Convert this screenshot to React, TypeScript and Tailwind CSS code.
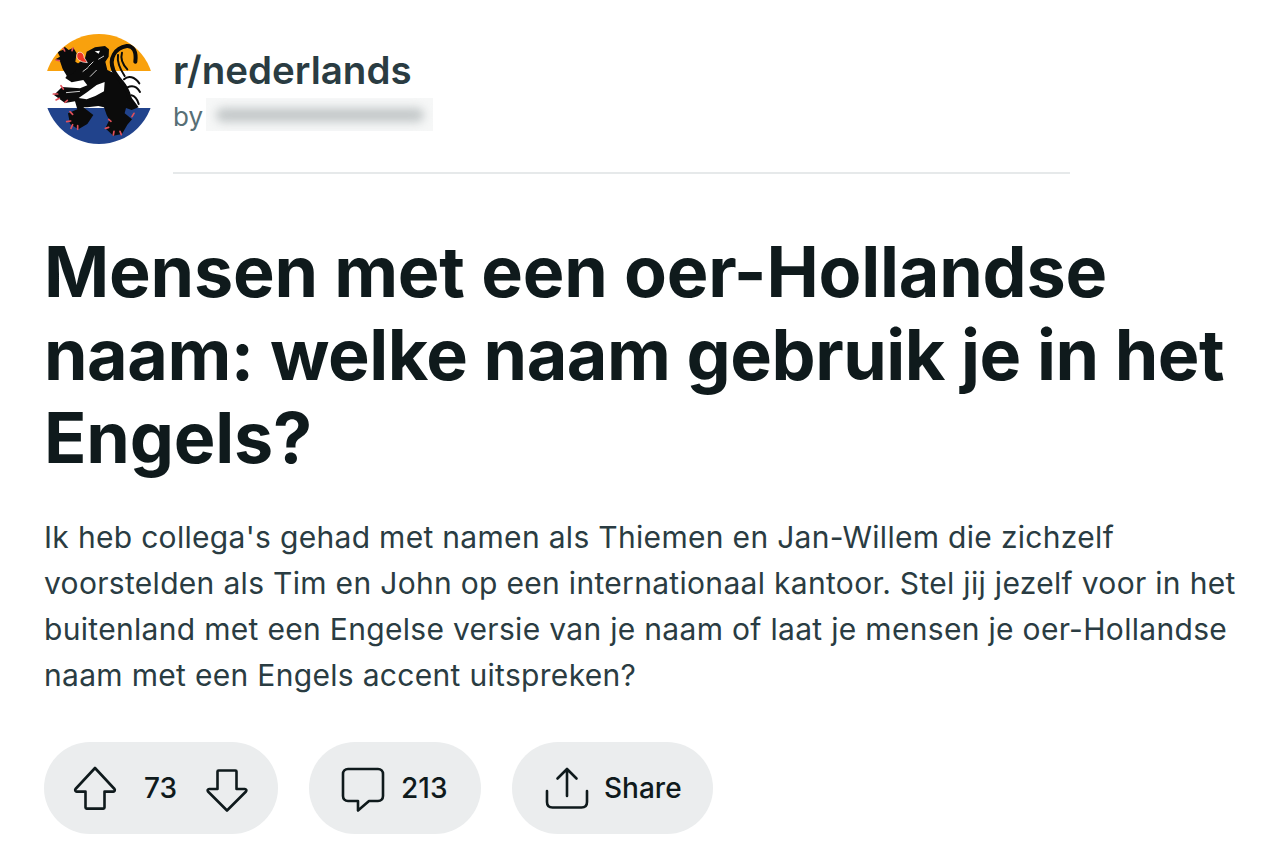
import React from "react";

function Lion() {
  return (
    <svg viewBox="0 0 110 110" className="w-[110px] h-[110px] rounded-full shrink-0">
      <rect width="110" height="37" fill="#f9a10d" />
      <rect y="37" width="110" height="37" fill="#fff" />
      <rect y="74" width="110" height="36" fill="#21438c" />
      <g transform="translate(-14 -14) scale(0.33333)">
        <path fill="#0b0b0b" d="M170,95 L195,82 L225,78 L237,88 L236,110 L226,125 L232,150 L258,162 L286,192 L306,235 L326,262 L305,270 L288,264 L284,280 L306,298 L292,314 L276,342 L250,347 L226,325 L238,300 L230,285 L222,262 L205,258 L172,262 L160,262 L190,285 L172,312 L145,328 L120,312 L114,280 L142,268 L135,244 L105,249 L72,225 L96,201 L150,205 L172,196 L160,180 L125,187 L106,174 L122,150 L145,130 L165,115 Z" />
        <path fill="#0b0b0b" d="M82,95 L98,90 L104,80 L116,90 L130,83 L140,100 L136,125 L152,135 L130,160 L112,170 L98,147 L90,124 L76,118 L90,110 Z" />
        <path fill="none" stroke="#0b0b0b" strokeWidth="12" strokeLinecap="round" d="M298,235 C296,200 262,178 250,150 C236,115 255,84 290,78 C310,76 320,95 316,125" />
        <path fill="none" stroke="#0b0b0b" strokeWidth="6" strokeLinecap="round" d="M264,105 C260,130 272,150 284,168 M276,98 C270,118 280,135 292,148 M282,178 C295,166 314,170 328,190 M292,202 C305,196 320,198 330,216 M304,226 C314,228 322,238 326,252" />
        <path fill="#fff" d="M146,234 L172,216 L200,195 L224,186 L222,214 L196,228 L170,238 Z" />
        <path fill="#fff" d="M194,94 L210,92 L206,101 Z" />
        <path fill="none" stroke="#d0d0d0" strokeWidth="3" d="M175,140 L190,125 M158,155 L175,142 M205,118 L222,108 M108,218 L150,214 M180,170 L200,150" />
        <path fill="#ee3322" stroke="#fff" strokeWidth="2" d="M144,98 C153,93 163,102 162,112 L172,128 L158,126 L146,120 C139,114 139,103 144,98 Z" />
        <g stroke="#e2505a" strokeWidth="5" strokeLinecap="round" fill="none">
          <path d="M78,120 L88,122 M100,85 L104,93 M129,84 L126,92" />
          <path d="M70,222 L83,222 M93,197 L100,207 M78,240 L88,235 M105,247 L112,241" />
          <path d="M120,275 L128,283 M110,305 L122,303 M123,325 L128,314 M143,328 L143,317" />
          <path d="M226,325 L236,322 M236,298 L243,304 M250,345 L252,334 M274,344 L270,334 M312,280 L306,290" />
        </g>
      </g>
    </svg>
  );
}

function Up() {
  return (
    <svg width="44" height="44" viewBox="0 0 44 44" fill="none" stroke="#0f1a1c" strokeWidth="2.6" strokeLinejoin="round" strokeLinecap="round">
      <path d="M22 2 L41.5 23 C42.3 24.2 41.6 25.6 40.4 25.6 L31.5 25.6 L31.5 41.5 C31.5 42.2 31 42.6 30.4 42.6 L13.6 42.6 C13 42.6 12.5 42.2 12.5 41.5 L12.5 25.6 L3.6 25.6 C2.4 25.6 1.7 24.2 2.5 23 Z" />
    </svg>
  );
}

function Down() {
  return (
    <svg width="44" height="44" viewBox="0 0 44 44" fill="none" stroke="#0f1a1c" strokeWidth="2.6" strokeLinejoin="round" strokeLinecap="round">
      <path d="M22 42.5 L41 23.5 C41.8 22.3 41.1 21 39.9 21 L31.5 21 L31.5 3.6 C31.5 2.9 31 2.5 30.4 2.5 L13.6 2.5 C13 2.5 12.5 2.9 12.5 3.6 L12.5 21 L4.1 21 C2.9 21 2.2 22.3 3 23.5 Z" />
    </svg>
  );
}

function Comment() {
  return (
    <svg width="44" height="48" viewBox="0 0 44 48" fill="none" stroke="#0f1a1c" strokeWidth="2.6" strokeLinejoin="round" strokeLinecap="round">
      <path d="M7 5 L37 5 C40 5 42 7 42 10 L42 32 C42 35 40 37 37 37 L28 37 L17 46.5 L17 37 L7 37 C4 37 2 35 2 32 L2 10 C2 7 4 5 7 5 Z" />
    </svg>
  );
}

function Share() {
  return (
    <svg width="44" height="44" viewBox="0 0 44 44" fill="none" stroke="#0f1a1c" strokeWidth="2.6" strokeLinejoin="round" strokeLinecap="round">
      <path d="M22 30 L22 3 M12.5 12.5 L22 3 L31.5 12.5" />
      <path d="M2 25 L2 36 C2 39.5 4 41.5 7.5 41.5 L36.5 41.5 C40 41.5 42 39.5 42 36 L42 25" />
    </svg>
  );
}

export default function App() {
  return (
    <div className="w-[1280px] h-[862px] bg-white overflow-hidden pl-[44px] pt-[34px] font-['Inter',sans-serif]">
      <div className="flex gap-[19px]">
        <Lion />
        <div className="flex flex-col w-[897px]">
          <div className="text-[38.5px] leading-[46px] font-semibold text-[#2a3c42] mt-[13px]">r/nederlands</div>
          <div className="flex items-center h-[33px] mt-[5px]">
            <span className="text-[26px] leading-[33px] text-[#576f76] mt-[4px]">by</span>
            <div className="relative ml-[3px] w-[227px] h-[33px] overflow-hidden bg-[#f6f7f7]">
              <div className="absolute left-[10px] top-[10px] w-[208px] h-[14px] rounded-full bg-[#c3c8c9] blur-[5px]" />
            </div>
          </div>
          <div className="h-[2px] bg-[#e6e9ea] mt-[41px]" />
        </div>
      </div>
      <h1 className="mt-[56px] w-[1220px] text-[70px] leading-[83px] font-bold text-[#0f1a1c] tracking-[-0.2px]">
        <span className="block whitespace-nowrap">Mensen met een oer-Hollandse</span>
        <span className="block whitespace-nowrap tracking-[-0.47px]">naam: welke naam gebruik je in het</span>
        <span className="block whitespace-nowrap">Engels?</span>
      </h1>
      <p className="mt-[35px] w-[1200px] text-[30px] leading-[46px] text-[#2a3c42] tracking-[0.31px]">
        Ik heb collega's gehad met namen als Thiemen en Jan-Willem die zichzelf voorstelden als Tim en John op een internationaal kantoor. Stel jij jezelf voor in het buitenland met een Engelse versie van je naam of laat je mensen je oer-Hollandse naam met een Engels accent uitspreken?
      </p>
      <div className="flex gap-[31px] mt-[44px] text-[#0f1a1c] text-[28px] font-medium">
        <div className="flex items-center h-[92px] w-[234px] rounded-full bg-[#ebedee] pl-[29px]">
          <Up />
          <span className="ml-[27px] w-[38px]">73</span>
          <span className="ml-[23px] translate-y-[2px]"><Down /></span>
        </div>
        <div className="flex items-center h-[92px] w-[172px] rounded-full bg-[#ebedee] pl-[32px]">
          <Comment />
          <span className="ml-[16px]">213</span>
        </div>
        <div className="flex items-center h-[92px] w-[201px] rounded-full bg-[#ebedee] pl-[33px]">
          <Share />
          <span className="ml-[15px]">Share</span>
        </div>
      </div>
    </div>
  );
}
